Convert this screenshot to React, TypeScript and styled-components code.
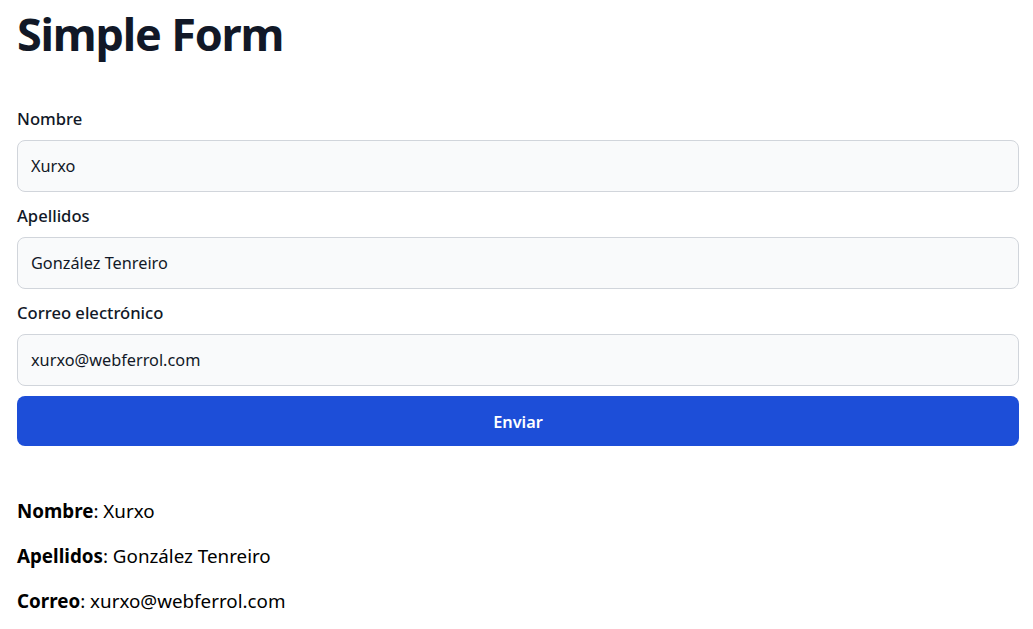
import React, { useState } from "react";
import styled, { createGlobalStyle } from "styled-components";

const Global = createGlobalStyle`
  html, body { margin: 0; padding: 0; background: #ffffff; }
  body { font-family: "Noto Sans", "Open Sans", sans-serif; color: #111827; }
  * { box-sizing: border-box; }
`;

const Page = styled.main`
  padding: 0 14px 0 17px;
`;

const Title = styled.h1`
  margin: 0;
  padding-top: 6px;
  font-size: 45px;
  line-height: 56px;
  font-weight: 700;
  color: #111827;
  letter-spacing: -1.2px;
`;

const Form = styled.form`
  display: flex;
  flex-direction: column;
  gap: 12px;
  margin-top: 45px;
`;

const Field = styled.div`
  display: flex;
  flex-direction: column;
  gap: 9px;
`;

const Label = styled.label`
  font-size: 16.6px;
  line-height: 24px;
  font-weight: 500;
  color: #111827;
`;

const Input = styled.input`
  height: 52px;
  width: 100%;
  padding: 0 13px;
  border: 1px solid #d1d5db;
  border-radius: 8px;
  background: #f9fafb;
  font-family: inherit;
  font-size: 16.3px;
  color: #111827;
  outline: none;
`;

const Button = styled.button`
  height: 50px;
  margin-top: -2px;
  padding-top: 2px;
  border: none;
  border-radius: 8px;
  background: #1d4ed8;
  color: #ffffff;
  font-family: inherit;
  font-size: 16.3px;
  font-weight: 600;
  cursor: pointer;
`;

const Results = styled.section`
  margin-top: 52px;
`;

const Line = styled.p`
  margin: 0 0 18px;
  font-size: 18.8px;
  line-height: 27px;
  color: #000000;
`;

export default function App() {
  const [nombre, setNombre] = useState("Xurxo");
  const [apellidos, setApellidos] = useState("González Tenreiro");
  const [correo, setCorreo] = useState("xurxo@webferrol.com");

  return (
    <Page>
      <Global />
      <Title>Simple Form</Title>
      <Form onSubmit={(e) => e.preventDefault()}>
        <Field>
          <Label htmlFor="nombre">Nombre</Label>
          <Input id="nombre" value={nombre} onChange={(e) => setNombre(e.target.value)} />
        </Field>
        <Field>
          <Label htmlFor="apellidos">Apellidos</Label>
          <Input id="apellidos" value={apellidos} onChange={(e) => setApellidos(e.target.value)} />
        </Field>
        <Field>
          <Label htmlFor="correo">Correo electrónico</Label>
          <Input id="correo" type="email" value={correo} onChange={(e) => setCorreo(e.target.value)} />
        </Field>
        <Button type="submit">Enviar</Button>
      </Form>
      <Results>
        <Line><strong>Nombre</strong>: {nombre}</Line>
        <Line><strong>Apellidos</strong>: {apellidos}</Line>
        <Line><strong>Correo</strong>: {correo}</Line>
      </Results>
    </Page>
  );
}
